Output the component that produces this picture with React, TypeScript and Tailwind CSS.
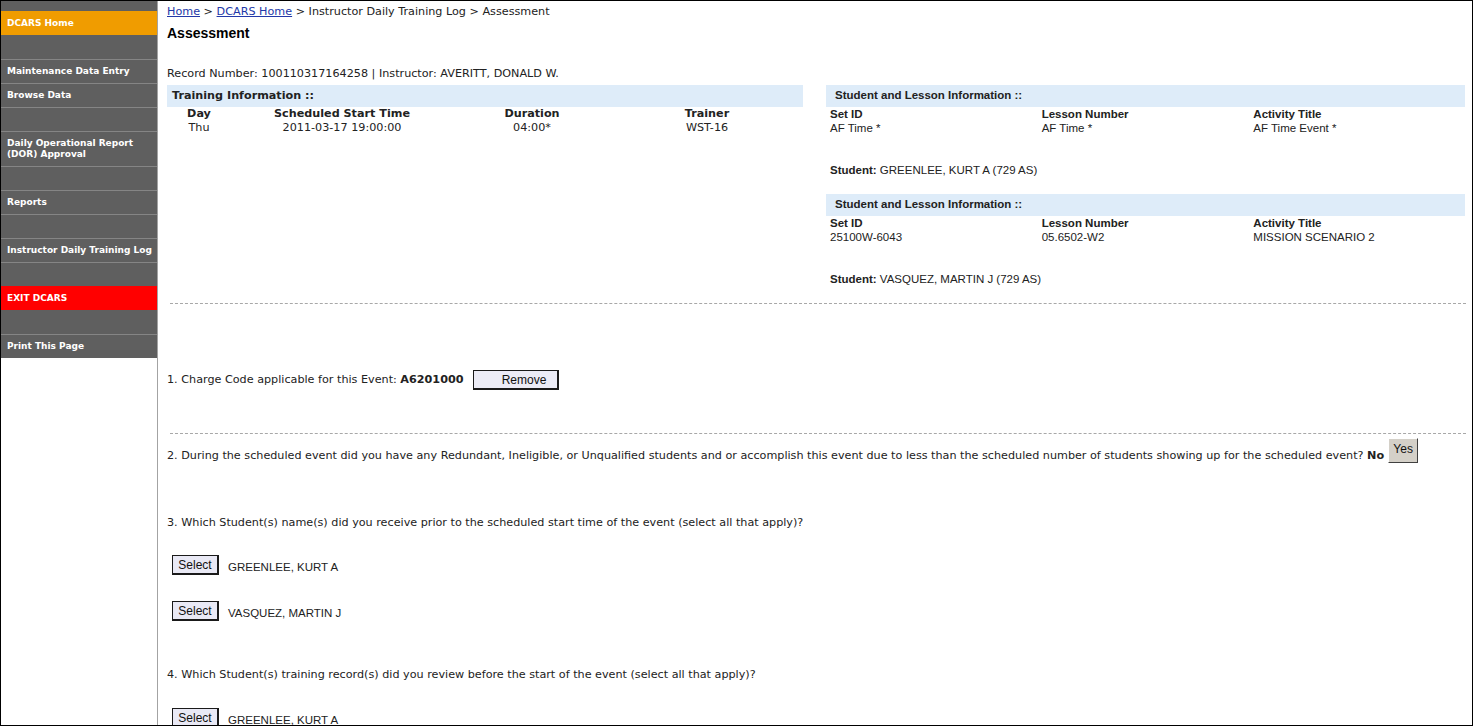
import React from 'react';

type NavRow = {
    label?: string;
    kind: 'gray' | 'orange' | 'red';
    tall?: boolean;
    line?: boolean;
};

const navRows: NavRow[] = [
    { label: 'DCARS Home', kind: 'orange' },
    { kind: 'gray' },
    { label: 'Maintenance Data Entry', kind: 'gray', line: true },
    { label: 'Browse Data', kind: 'gray', line: true },
    { kind: 'gray', line: true },
    { label: 'Daily Operational Report (DOR) Approval', kind: 'gray', line: true, tall: true },
    { kind: 'gray', line: true },
    { label: 'Reports', kind: 'gray', line: true },
    { kind: 'gray', line: true },
    { label: 'Instructor Daily Training Log', kind: 'gray', line: true },
    { kind: 'gray', line: true },
    { label: 'EXIT DCARS', kind: 'red' },
    { kind: 'gray' },
    { label: 'Print This Page', kind: 'gray', line: true },
];

const Sidebar: React.FC = () => {
    return (
        <aside className="w-[157px] shrink-0 border-r border-[#a3a3a3] bg-white">
            <div className="h-[10px] bg-[#5f5f5f]"></div>
            {navRows.map((row, i) => {
                const bg =
                    row.kind === 'orange' ? 'bg-[#f09c00]' : row.kind === 'red' ? 'bg-[#ff0000]' : 'bg-[#5f5f5f]';
                return (
                    <div
                        key={i}
                        className={`${bg} ${row.tall ? 'h-[35px] pr-[20px]' : 'h-[24px] whitespace-nowrap pr-[1px]'} ${
                            row.line ? 'border-t border-[#858585]' : ''
                        } flex items-center pl-[6px] text-[9px] font-bold leading-[11px] text-white`}
                    >
                        {row.label}
                    </div>
                );
            })}
        </aside>
    );
};

const SelectButton: React.FC = () => (
    <button className="h-[20px] w-[47px] border border-[#1a1a1a] border-b-2 border-r-2 bg-[#e9e9f5] font-['Liberation_Sans',Arial,sans-serif] text-[12px] leading-none text-[#111]">
        Select
    </button>
);

const StudentBlock: React.FC<{ setId: string; lesson: string; title: string; student: string }> = ({
    setId,
    lesson,
    title,
    student,
}) => (
    <div className="font-['Liberation_Sans',Tahoma,sans-serif] text-[11.5px] text-[#222]">
        <div className="flex h-[22px] items-center bg-[#deecf9] pl-[9px] font-bold">Student and Lesson Information ::</div>
        <div className="grid grid-cols-3 pl-[4px] leading-[14px]">
            <div className="font-bold">Set ID</div>
            <div className="font-bold">Lesson Number</div>
            <div className="font-bold">Activity Title</div>
            <div>{setId}</div>
            <div>{lesson}</div>
            <div>{title}</div>
        </div>
        <div className="mt-[28px] pl-[4px] leading-[14px]">
            <span className="font-bold">Student:</span> {student}
        </div>
    </div>
);

export default function App() {
    return (
        <div className="flex h-[726px] w-[1473px] overflow-hidden border border-black bg-white font-['DejaVu_Sans',Verdana,sans-serif] text-[11.2px] text-[#222]">
            <Sidebar />
            <main className="flex-1 pl-[9px] pr-[6px]">
                <div className="mt-[4px] h-[14px] leading-[14px]">
                    <a href="#" className="text-[#2338a8] underline">Home</a> &gt;{' '}
                    <a href="#" className="text-[#2338a8] underline">DCARS Home</a> &gt; Instructor Daily Training Log &gt; Assessment
                </div>
                <h1 className="mt-[5px] h-[18px] font-['Liberation_Sans',Arial,sans-serif] text-[14px] font-bold leading-[18px] text-black">
                    Assessment
                </h1>
                <div className="mt-[25px] h-[14px] leading-[14px]">
                    Record Number: 100110317164258 | Instructor: AVERITT, DONALD W.
                </div>

                <div className="mt-[4px] grid grid-cols-[636px_639px] gap-x-[23px]">
                    <div>
                        <div className="flex h-[22px] items-center bg-[#deecf9] pl-[5px] font-bold">
                            Training Information ::
                        </div>
                        <table className="w-[636px] table-fixed leading-[14px]">
                            <thead>
                                <tr className="font-bold">
                                    <th className="w-[64px] text-center">Day</th>
                                    <th className="w-[222px] text-center">Scheduled Start Time</th>
                                    <th className="w-[158px] text-center">Duration</th>
                                    <th className="text-center">Trainer</th>
                                </tr>
                            </thead>
                            <tbody>
                                <tr>
                                    <td className="text-center">Thu</td>
                                    <td className="text-center">2011-03-17 19:00:00</td>
                                    <td className="text-center">04:00*</td>
                                    <td className="text-center">WST-16</td>
                                </tr>
                            </tbody>
                        </table>
                    </div>
                    <div>
                        <StudentBlock
                            setId="AF Time *"
                            lesson="AF Time *"
                            title="AF Time Event *"
                            student="GREENLEE, KURT A (729 AS)"
                        />
                        <div className="mt-[17px]">
                            <StudentBlock
                                setId="25100W-6043"
                                lesson="05.6502-W2"
                                title="MISSION SCENARIO 2"
                                student="VASQUEZ, MARTIN J (729 AS)"
                            />
                        </div>
                    </div>
                </div>

                <div className="ml-[3px] mt-[17px] border-t border-dashed border-[#a8a8a8]"></div>

                <div className="mt-[66px] flex h-[20px] items-center">
                    <span>
                        1. Charge Code applicable for this Event: <b>A6201000</b>
                    </span>
                    <button className="ml-[9px] h-[20px] w-[86px] border border-[#1a1a1a] border-b-2 border-r-2 bg-[#ececf6] pl-[18px] font-['Liberation_Sans',Arial,sans-serif] text-[12px] leading-none text-[#111]">
                        Remove
                    </button>
                </div>

                <div className="ml-[3px] mt-[43px] border-t border-dashed border-[#a8a8a8]"></div>

                <div className="mt-[4px] flex h-[25px] items-end whitespace-nowrap">
                    <span className="leading-[14px]">
                        2. During the scheduled event did you have any Redundant, Ineligible, or Unqualified students and or
                        accomplish this event due to less than the scheduled number of students showing up for the scheduled
                        event? <b>No</b>
                    </span>
                    <button className="ml-[4px] flex h-[25px] w-[30px] items-start justify-center border border-b-[#404040] border-l-white border-r-[#404040] border-t-white bg-[#d4d0c8] pt-[4px] font-['Liberation_Sans',Arial,sans-serif] text-[12px] leading-none text-[#111]">
                        Yes
                    </button>
                </div>

                <div className="mt-[53px] h-[14px] leading-[14px]">
                    3. Which Student(s) name(s) did you receive prior to the scheduled start time of the event (select all that
                    apply)?
                </div>

                <div className="ml-[5px] mt-[25px] flex h-[20px] items-end">
                    <SelectButton />
                    <span className="ml-[9px] mb-[1px] font-['Liberation_Sans',Tahoma,sans-serif] text-[11.5px] leading-[14px]">
                        GREENLEE, KURT A
                    </span>
                </div>
                <div className="ml-[5px] mt-[26px] flex h-[20px] items-end">
                    <SelectButton />
                    <span className="ml-[9px] mb-[1px] font-['Liberation_Sans',Tahoma,sans-serif] text-[11.5px] leading-[14px]">
                        VASQUEZ, MARTIN J
                    </span>
                </div>

                <div className="mt-[47px] h-[14px] leading-[14px]">
                    4. Which Student(s) training record(s) did you review before the start of the event (select all that apply)?
                </div>

                <div className="ml-[5px] mt-[26px] flex h-[20px] items-end">
                    <SelectButton />
                    <span className="ml-[9px] mb-[1px] font-['Liberation_Sans',Tahoma,sans-serif] text-[11.5px] leading-[14px]">
                        GREENLEE, KURT A
                    </span>
                </div>
            </main>
        </div>
    );
}
